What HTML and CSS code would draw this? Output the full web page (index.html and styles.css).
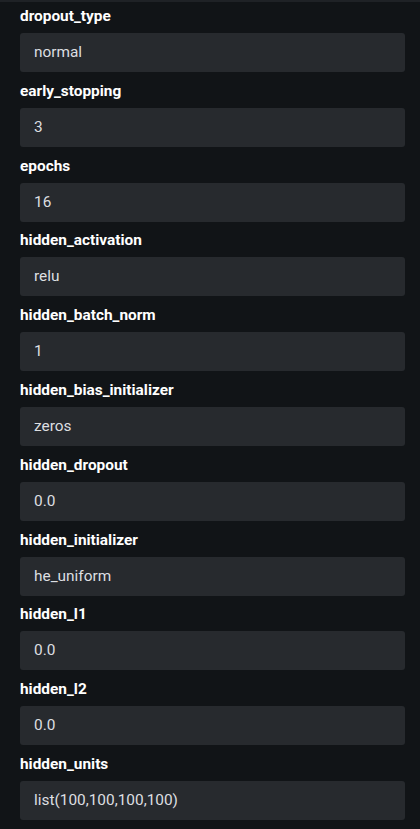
FILE: index.html
```html
<!DOCTYPE html>
<html>
<head>
<meta charset="utf-8">
<link rel="stylesheet" href="styles.css">
</head>
<body>
<div class="panel">
  <div class="group"><div class="label">dropout_type</div><div class="field">normal</div></div>
  <div class="group"><div class="label">early_stopping</div><div class="field">3</div></div>
  <div class="group"><div class="label">epochs</div><div class="field">16</div></div>
  <div class="group"><div class="label">hidden_activation</div><div class="field">relu</div></div>
  <div class="group"><div class="label">hidden_batch_norm</div><div class="field">1</div></div>
  <div class="group"><div class="label">hidden_bias_initializer</div><div class="field">zeros</div></div>
  <div class="group"><div class="label">hidden_dropout</div><div class="field">0.0</div></div>
  <div class="group"><div class="label">hidden_initializer</div><div class="field">he_uniform</div></div>
  <div class="group"><div class="label">hidden_l1</div><div class="field">0.0</div></div>
  <div class="group"><div class="label">hidden_l2</div><div class="field">0.0</div></div>
  <div class="group"><div class="label">hidden_units</div><div class="field">list(100,100,100,100)</div></div>
</div>
</body>
</html>
```

FILE: styles.css
```css
html, body {
  margin: 0;
  padding: 0;
  background: #111417;
  height: 100%;
  overflow: hidden;
}
body {
  font-family: Roboto, "Liberation Sans", sans-serif;
}
.panel {
  border-top: 2px solid #1f2226;
  padding: 4px 15px 0 20px;
  display: flex;
  flex-direction: column;
  gap: 8.8px;
}
.group {
  display: flex;
  flex-direction: column;
}
.label {
  color: #ffffff;
  font-weight: 700;
  font-size: 15.4px;
  line-height: 20px;
  margin-bottom: 7px;
}
.field {
  box-sizing: border-box;
  height: 39px;
  background: #272a2e;
  border-radius: 3px;
  color: #dddfe1;
  font-size: 15.4px;
  line-height: 39px;
  padding-left: 14px;
}
```
